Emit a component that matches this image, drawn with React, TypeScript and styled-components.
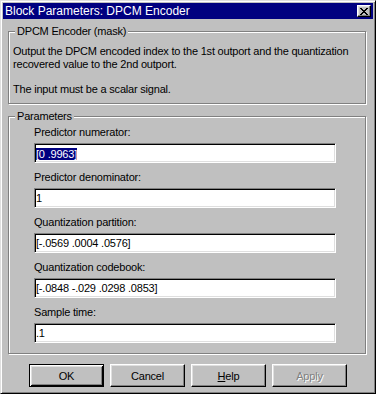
import React from 'react';
import styled, { createGlobalStyle } from 'styled-components';

const GlobalStyle = createGlobalStyle`
  html, body {
    margin: 0;
    padding: 0;
    background: #c0c0c0;
  }
  body {
    font-family: "Liberation Sans", Arial, sans-serif;
    font-size: 11px;
    letter-spacing: -0.2px;
    color: #000;
  }
`;

const Window = styled.div`
  width: 376px;
  height: 394px;
  box-sizing: border-box;
  display: flex;
  flex-direction: column;
  background: #c0c0c0;
  border: 1px solid;
  border-color: #dfdfdf #000 #000 #dfdfdf;
  box-shadow: inset 1px 1px 0 #fff, inset -1px -1px 0 #808080;
  padding: 2px;
`;

const TitleBar = styled.div`
  height: 16px;
  flex: none;
  background: #000080;
  color: #fff;
  display: flex;
  align-items: center;
  justify-content: space-between;
  padding: 0 2px 0 2px;
`;

const TitleText = styled.span`
  font-family: "Liberation Sans Narrow", "Liberation Sans", Arial, sans-serif;
  font-size: 12px;
  letter-spacing: 0;
  line-height: 16px;
  white-space: nowrap;
`;

const CloseButton = styled.div`
  width: 14px;
  height: 12px;
  box-sizing: border-box;
  background: #c0c0c0;
  border: 1px solid;
  border-color: #fff #000 #000 #fff;
  box-shadow: inset -1px -1px 0 #808080, inset 1px 1px 0 #dfdfdf;
  display: flex;
  align-items: center;
  justify-content: center;
`;

const Body = styled.div`
  flex: 1;
  display: flex;
  flex-direction: column;
  padding: 6px 6px 3px 5px;
`;

const Group = styled.fieldset<{ $gap: number }>`
  margin: ${p => p.$gap}px 0 0 0;
  padding: 0;
  width: 358px;
  min-width: 0;
  box-sizing: border-box;
  border: 1px solid #808080;
  box-shadow: inset 1px 1px 0 #fff, 1px 1px 0 #fff;
`;

const Legend = styled.legend`
  margin-left: 6px;
  padding: 0 2px;
  line-height: 13px;
  background: #c0c0c0;
`;

const Description = styled.div`
  padding: 7px 4px 7px 4px;
  line-height: 13px;
  white-space: nowrap;

  p {
    margin: 0;
  }
  p + p {
    margin-top: 12px;
  }
`;

const ParamList = styled.div`
  padding: 3px 29px 10px 25px;
  display: flex;
  flex-direction: column;
  gap: 8px;
`;

const Row = styled.div`
  display: flex;
  flex-direction: column;
`;

const Label = styled.div`
  line-height: 13px;
  margin-bottom: 4px;
`;

const Field = styled.div`
  width: 302px;
  height: 20px;
  box-sizing: border-box;
  background: #fff;
  border: 1px solid;
  border-color: #808080 #fff #fff #808080;
  box-shadow: inset 1px 1px 0 #000, inset -1px -1px 0 #dfdfdf;
  padding: 0 0 0 1px;
  line-height: 18px;
  white-space: nowrap;
  overflow: hidden;
`;

const Selected = styled.span`
  display: inline-block;
  background: #000080;
  color: #fff;
  line-height: 12px;
  vertical-align: middle;
`;

const ButtonRow = styled.div`
  display: flex;
  gap: 6px;
  margin-top: 10px;
  padding-left: 21px;
`;

const Button = styled.button<{ $default?: boolean; $disabled?: boolean }>`
  width: 75px;
  height: 23px;
  box-sizing: border-box;
  padding: 0;
  background: #c0c0c0;
  font-family: inherit;
  font-size: 11px;
  letter-spacing: inherit;
  color: ${p => (p.$disabled ? '#808080' : '#000')};
  text-shadow: ${p => (p.$disabled ? '1px 1px 0 #fff' : 'none')};
  border: 1px solid;
  border-color: ${p => (p.$default ? '#000' : '#fff #000 #000 #fff')};
  box-shadow: ${p =>
    p.$default
      ? 'inset 1px 1px 0 #fff, inset -1px -1px 0 #000, inset 2px 2px 0 #dfdfdf, inset -2px -2px 0 #808080'
      : 'inset -1px -1px 0 #808080, inset 1px 1px 0 #dfdfdf'};

  u {
    text-decoration: underline;
  }
`;

const CloseIcon = () => (
  <svg width="8" height="7" viewBox="0 0 8 7" shapeRendering="crispEdges">
    <path
      fill="#000"
      d="M0 0h2v1h-2zM6 0h2v1h-2zM1 1h2v1h-2zM5 1h2v1h-2zM2 2h4v1h-4zM3 3h2v1h-2zM2 4h4v1h-4zM1 5h2v1h-2zM5 5h2v1h-2zM0 6h2v1h-2zM6 6h2v1h-2z"
    />
  </svg>
);

const params = [
  { label: 'Predictor numerator:', value: '[0 .9963]', selected: true },
  { label: 'Predictor denominator:', value: '1' },
  { label: 'Quantization partition:', value: '[-.0569 .0004 .0576]' },
  { label: 'Quantization codebook:', value: '[-.0848 -.029 .0298 .0853]' },
  { label: 'Sample time:', value: '.1' },
];

const App = () => (
  <>
    <GlobalStyle />
    <Window>
      <TitleBar>
        <TitleText>Block Parameters: DPCM Encoder</TitleText>
        <CloseButton>
          <CloseIcon />
        </CloseButton>
      </TitleBar>
      <Body>
        <Group $gap={0}>
          <Legend>DPCM Encoder (mask)</Legend>
          <Description>
            <p>
              Output the DPCM encoded index to the 1st outport and the quantization
              <br />
              recovered value to the 2nd outport.
            </p>
            <p>The input must be a scalar signal.</p>
          </Description>
        </Group>
        <Group $gap={6}>
          <Legend>Parameters</Legend>
          <ParamList>
            {params.map(p => (
              <Row key={p.label}>
                <Label>{p.label}</Label>
                <Field>{p.selected ? <Selected>{p.value}</Selected> : p.value}</Field>
              </Row>
            ))}
          </ParamList>
        </Group>
        <ButtonRow>
          <Button $default>OK</Button>
          <Button>Cancel</Button>
          <Button>
            <u>H</u>elp
          </Button>
          <Button $disabled>Apply</Button>
        </ButtonRow>
      </Body>
    </Window>
  </>
);

export default App;
